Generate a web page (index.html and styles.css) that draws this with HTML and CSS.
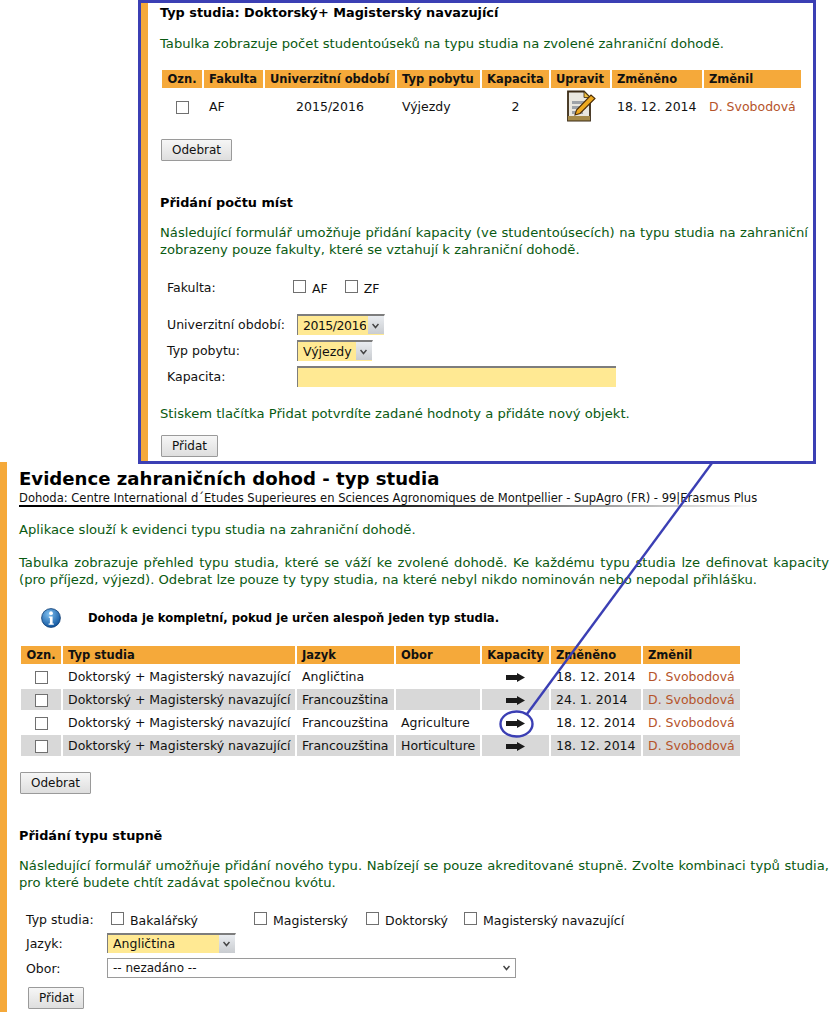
FILE: index.html
```html
<!DOCTYPE html>
<html lang="cs">
<head>
<meta charset="utf-8">
<title>Evidence zahraničních dohod - typ studia</title>
<link rel="stylesheet" href="styles.css">
</head>
<body>
<div class="page">
  <section class="callout">
    <div class="callout-inner">
      <h3 class="h-first">Typ studia: Doktorský+ Magisterský navazující</h3>
      <p class="note note-a">Tabulka zobrazuje počet studentoúseků na typu studia na zvolené zahraniční dohodě.</p>
      <table class="grid grid-cap">
        <colgroup><col class="c1"><col class="c2"><col class="c3"><col class="c4"><col class="c5"><col class="c6"><col class="c7"><col class="c8"></colgroup>
        <thead><tr><th class="ctr">Ozn.</th><th>Fakulta</th><th>Univerzitní období</th><th>Typ pobytu</th><th>Kapacita</th><th>Upravit</th><th>Změněno</th><th>Změnil</th></tr></thead>
        <tbody><tr class="tall">
          <td class="ctr"><input type="checkbox" class="cb"></td><td>AF</td><td class="ctr">2015/2016</td><td>Výjezdy</td><td class="ctr">2</td>
          <td class="ctr"><svg class="ico-edit" viewBox="0 0 30 32" width="30" height="32"><path d="M2 1.500h16l6 6v23H2z" fill="#e9e7df" stroke="#3a2a14" stroke-width="1.800"/><path d="M18 1.500v6h6z" fill="#f0c040" stroke="#3a2a14" stroke-width=".8"/><path d="M2 26h22v4.500H2z" fill="#a58a4a"/><path d="M6 11h14v3H6zM6 16h14v3H6zM6 21h11v3H6z" fill="#9ea3a8"/><path d="M9 25l1.500-5L25 5l4 3.500L14 23.500z" fill="#eda91f" stroke="#4a2c08" stroke-width="1.100"/></svg></td>
          <td>18. 12. 2014</td><td class="who">D. Svobodová</td>
        </tr></tbody>
      </table>
      <button class="btn btn-cap-del" type="button">Odebrat</button>
      <h3 class="h-cap-add">Přidání počtu míst</h3>
      <p class="note note-cap"><span class="just">Následující formulář umožňuje přidání kapacity (ve studentoúsecích) na typu studia na zahraniční</span><span class="line">zobrazeny pouze fakulty, které se vztahují k zahraniční dohodě.</span></p>
      <div class="row row-fak"><span class="lab lab-cap lab-fak">Fakulta:</span><label class="chk chk-af"><input type="checkbox" class="cb"><span>AF</span></label><label class="chk"><input type="checkbox" class="cb"><span>ZF</span></label></div>
      <div class="row row-uo"><span class="lab lab-cap">Univerzitní období:</span><select class="sel sel-y sel-uo"><option>2015/2016</option></select></div>
      <div class="row row-tp"><span class="lab lab-cap">Typ pobytu:</span><select class="sel sel-y sel-tp"><option>Výjezdy</option></select></div>
      <div class="row row-tp"><span class="lab lab-cap">Kapacita:</span><input type="text" class="inp"></div>
      <p class="note note-st">Stiskem tlačítka Přidat potvrdíte zadané hodnoty a přidáte nový objekt.</p>
      <button class="btn btn-cap-add" type="button">Přidat</button>
    </div>
  </section>

  <main class="main">
    <h1>Evidence zahraničních dohod - typ studia</h1>
    <div class="sub">Dohoda: Centre International d´Etudes Superieures en Sciences Agronomiques de Montpellier - SupAgro (FR) - 99|Erasmus Plus</div>
    <div class="rule"></div>
    <p class="note note-app">Aplikace slouží k evidenci typu studia na zahraniční dohodě.</p>
    <p class="note note-tab"><span class="just just-w">Tabulka zobrazuje přehled typu studia, které se váží ke zvolené dohodě. Ke každému typu studia lze definovat kapacity</span><span class="line">(pro příjezd, výjezd). Odebrat lze pouze ty typy studia, na které nebyl nikdo nominován nebo nepodal přihlášku.</span></p>
    <div class="info">
      <svg class="ico-info" viewBox="0 0 20 20" width="20" height="20"><defs><radialGradient id="ig" cx="40%" cy="30%" r="75%"><stop offset="0" stop-color="#7fc0f0"/><stop offset="1" stop-color="#0a4f9a"/></radialGradient></defs><circle cx="10" cy="10" r="9.4" fill="url(#ig)" stroke="#0b3a70" stroke-width=".8"/><circle cx="10" cy="5.2" r="1.9" fill="#fff"/><path d="M7.8 8.4h3.8v7h1.2v1.4H7.600v-1.4h1.300v-5.600H7.800z" fill="#fff"/></svg>
      <strong>Dohoda je kompletní, pokud je určen alespoň jeden typ studia.</strong>
    </div>
    <table class="grid grid-main">
      <colgroup><col class="m1"><col class="m2"><col class="m3"><col class="m4"><col class="m5"><col class="m6"><col class="m7"></colgroup>
      <thead><tr><th class="ctr">Ozn.</th><th>Typ studia</th><th>Jazyk</th><th>Obor</th><th class="ctr">Kapacity</th><th>Změněno</th><th>Změnil</th></tr></thead>
      <tbody>
        <tr><td class="ctr"><input type="checkbox" class="cb"></td><td>Doktorský + Magisterský navazující</td><td>Angličtina</td><td></td><td class="ctr"><svg class="ico-arrow" viewBox="0 0 19 9" width="19" height="9"><path d="M0 2h11V0l8 4.500-8 4.500V7H0z" fill="#1a1a1a"/></svg></td><td>18. 12. 2014</td><td class="who">D. Svobodová</td></tr>
        <tr class="alt"><td class="ctr"><input type="checkbox" class="cb"></td><td>Doktorský + Magisterský navazující</td><td>Francouzština</td><td></td><td class="ctr"><svg class="ico-arrow" viewBox="0 0 19 9" width="19" height="9"><path d="M0 2h11V0l8 4.500-8 4.500V7H0z" fill="#1a1a1a"/></svg></td><td>24. 1. 2014</td><td class="who">D. Svobodová</td></tr>
        <tr><td class="ctr"><input type="checkbox" class="cb"></td><td>Doktorský + Magisterský navazující</td><td>Francouzština</td><td>Agriculture</td><td class="ctr"><svg class="ico-arrow" viewBox="0 0 19 9" width="19" height="9"><path d="M0 2h11V0l8 4.500-8 4.500V7H0z" fill="#1a1a1a"/></svg></td><td>18. 12. 2014</td><td class="who">D. Svobodová</td></tr>
        <tr class="alt"><td class="ctr"><input type="checkbox" class="cb"></td><td>Doktorský + Magisterský navazující</td><td>Francouzština</td><td>Horticulture</td><td class="ctr"><svg class="ico-arrow" viewBox="0 0 19 9" width="19" height="9"><path d="M0 2h11V0l8 4.500-8 4.500V7H0z" fill="#1a1a1a"/></svg></td><td>18. 12. 2014</td><td class="who">D. Svobodová</td></tr>
      </tbody>
    </table>
    <button class="btn btn-del" type="button">Odebrat</button>
    <h3 class="h-add">Přidání typu stupně</h3>
    <p class="note note-add"><span class="just just-w">Následující formulář umožňuje přidání nového typu. Nabízejí se pouze akreditované stupně. Zvolte kombinaci typů studia,</span><span class="line">pro které budete chtít zadávat společnou kvótu.</span></p>
    <div class="form">
      <div class="row row-typ"><span class="lab lab-main">Typ studia:</span><label class="chk chk-b"><input type="checkbox" class="cb"><span>Bakalářský</span></label><label class="chk chk-m"><input type="checkbox" class="cb"><span>Magisterský</span></label><label class="chk chk-d"><input type="checkbox" class="cb"><span>Doktorský</span></label><label class="chk"><input type="checkbox" class="cb"><span>Magisterský navazující</span></label></div>
      <div class="row row-j"><span class="lab lab-main lab-sel">Jazyk:</span><select class="sel sel-y sel-j"><option>Angličtina</option></select></div>
      <div class="row row-o"><span class="lab lab-main lab-sel">Obor:</span><select class="sel sel-o"><option>-- nezadáno --</option></select></div>
    </div>
    <button class="btn btn-add" type="button">Přidat</button>
  </main>

  <svg class="connector" viewBox="0 0 836 1014" width="836" height="1014" aria-hidden="true"><path d="M712 463L527 714" fill="none" stroke="#3b3fb4" stroke-width="2.4"/><ellipse cx="516.5" cy="724" rx="16" ry="12.5" fill="none" stroke="#3b3fb4" stroke-width="2.4"/></svg>
</div>
</body>
</html>
```
FILE: styles.css
```css
html, body { margin: 0; padding: 0; background: #fff; }
body { font-family: "DejaVu Sans", Verdana, sans-serif; font-size: 12.5px; line-height: 17px; color: #111; }
.page { position: relative; width: 836px; height: 1014px; overflow: hidden; }

.callout { box-sizing: border-box; margin-left: 138px; width: 678px; height: 464px; border: 3px solid #3b3fb4; background: #fff; overflow: hidden; }
.callout-inner { box-sizing: border-box; height: 100%; border-left: 7px solid #f5a93a; padding: 1px 0 0 12px; width: 700px; }

h1 { margin: 0; font-size: 18.1px; line-height: 24px; font-weight: bold; color: #000; }
h3 { margin: 0; font-size: 12.85px; line-height: 17px; font-weight: bold; color: #000; }

.note { margin: 0; color: #0a5a12; font-size: 13.15px; }
.note-a { margin-top: 14px; }
.note-cap { margin-top: 13px; }
.note-st { margin-top: 18px; }
.just { display: block; width: 648px; text-align: justify; text-align-last: justify; }
.just-w { width: 810px; }
.line { display: block; white-space: nowrap; }

.grid { border-collapse: separate; border-spacing: 2px; table-layout: fixed; }
.grid th, .grid td { box-sizing: border-box; }
.grid th { background: #f5a93a; height: 18px; padding: 0 5px; text-align: left; font-weight: bold; font-size: 11.5px; color: #111; white-space: nowrap; overflow: hidden; }
.grid td { height: 21px; padding: 0 5px; white-space: nowrap; vertical-align: middle; }
.grid .ctr { text-align: center; padding-left: 0; padding-right: 0; }
.grid tr.alt td { background: #d8d8d8; }
.grid .who { color: #b5532a; }
.tall td { height: 32px; }

.grid-cap { width: 643px; margin-top: 16px; }
.grid-main { width: 722px; margin-top: 16px; }
.c1 { width: 40px; } .c2 { width: 59px; } .c3 { width: 130px; } .c4 { width: 83px; }
.c5 { width: 67px; } .c6 { width: 59px; } .c7 { width: 90px; } .c8 { width: 97px; }
.m1 { width: 40px; } .m2 { width: 232px; } .m3 { width: 97px; } .m4 { width: 84px; }
.m5 { width: 67px; } .m6 { width: 90px; } .m7 { width: 97px; }

.cb { appearance: none; -webkit-appearance: none; box-sizing: border-box; width: 13px; height: 13px; margin: 0; border: 1px solid #707070; background: #fff; vertical-align: middle; border-radius: 0; }
.btn { display: block; box-sizing: border-box; height: 22px; padding: 0 10px; font: 12px/20px "DejaVu Sans", Verdana, sans-serif; color: #111; background: linear-gradient(#f6f6f6, #dedede); border: 1px solid #9a9a9a; border-radius: 1px; }
.btn-cap-del { margin: 15px 0 0 1px; width: 71px; }
.h-cap-add { margin-top: 33px; }
.btn-cap-add { margin: 13px 0 0 1px; width: 57px; }

.row { display: flex; align-items: center; }
.lab { flex: none; }
.lab-cap { width: 130px; margin-left: 7px; }
.lab-fak { width: 126px; }
.row-fak { margin-top: 19px; height: 20px; }
.row-uo { margin-top: 17px; height: 21px; }
.row-tp { margin-top: 5px; height: 21px; }
.chk { display: inline-flex; align-items: center; gap: 6px; margin-right: 16px; }
.chk-af { margin-right: 17px; }
.chk span { position: relative; top: 1px; }
.chk .cb { position: relative; top: -1px; }

.sel { appearance: none; -webkit-appearance: none; box-sizing: border-box; height: 21px; margin: 0; padding: 0 18px 0 5px; font: 12.5px/18px "DejaVu Sans", Verdana, sans-serif; color: #111; border: 1px solid #9a9a9a; border-radius: 0; background: #fff url("data:image/svg+xml,%3Csvg xmlns='http://www.w3.org/2000/svg' width='7' height='6'%3E%3Cpath d='M.5 1l3 3.500 3-3.500' fill='none' stroke='%23444' stroke-width='1.500'/%3E%3C/svg%3E") right 5px center no-repeat; }
.sel-y { background: url("data:image/svg+xml,%3Csvg xmlns='http://www.w3.org/2000/svg' width='7' height='6'%3E%3Cpath d='M.5 1l3 3.500 3-3.500' fill='none' stroke='%23444' stroke-width='1.500'/%3E%3C/svg%3E") right 5px center no-repeat, linear-gradient(#e9ecf0, #c9ccd0) right 0 top 0 / 16px 18px no-repeat, #ffe993; border-width: 2px 1px 0 1px; border-color: #7d7d7d #fff #7d7d7d #7d7d7d; }
.sel-uo { width: 88px; letter-spacing: -.5px; }
.sel-tp { width: 76px; }
.sel-j { width: 129px; }
.sel-o { width: 409px; height: 20px; font-size: 12px; }
.inp { box-sizing: border-box; width: 319px; height: 21px; margin: 0; padding: 0; background: #ffe993; border: 0; border-top: 2px solid #7d7d7d; border-left: 1px solid #7d7d7d; }

.main { box-sizing: border-box; height: 550px; margin-top: -2px; border-left: 7px solid #f5a93a; padding: 5px 0 0 12px; width: 860px; }
.sub { font-size: 11.55px; line-height: 14px; color: #111; white-space: nowrap; }
.rule { width: 740px; height: 2px; background: linear-gradient(90deg, #000 0, #000 45%, #fff 100%); }
.note-app { margin-top: 14px; }
.note-tab { margin-top: 16px; }
.info { display: flex; align-items: center; margin-top: 20px; height: 20px; padding-left: 22px; }
.info strong { margin-left: 27px; font-size: 11.6px; color: #000; }
.ico-info, .ico-edit, .ico-arrow { display: inline-block; vertical-align: middle; }
.btn-del { margin: 14px 0 0 1px; width: 71px; }
.h-add { margin-top: 33px; }
.note-add { margin-top: 13px; }
.form { margin-top: 18px; padding-left: 7px; }
.lab-main { width: 85px; }
.lab-sel { width: 81px; }
.row-typ { height: 20px; }
.chk-b { margin-right: 0; width: 143px; }
.chk-m { width: 96px; margin-right: 16px; }
.chk-d { width: 82px; margin-right: 16px; }
.row-j { margin-top: 4px; height: 20px; }
.row-j .sel { height: 20px; }
.row-o { margin-top: 5px; height: 20px; }
.btn-add { margin: 9px 0 0 9px; width: 56px; }
.connector { position: absolute; left: 0; top: 0; pointer-events: none; }
```
